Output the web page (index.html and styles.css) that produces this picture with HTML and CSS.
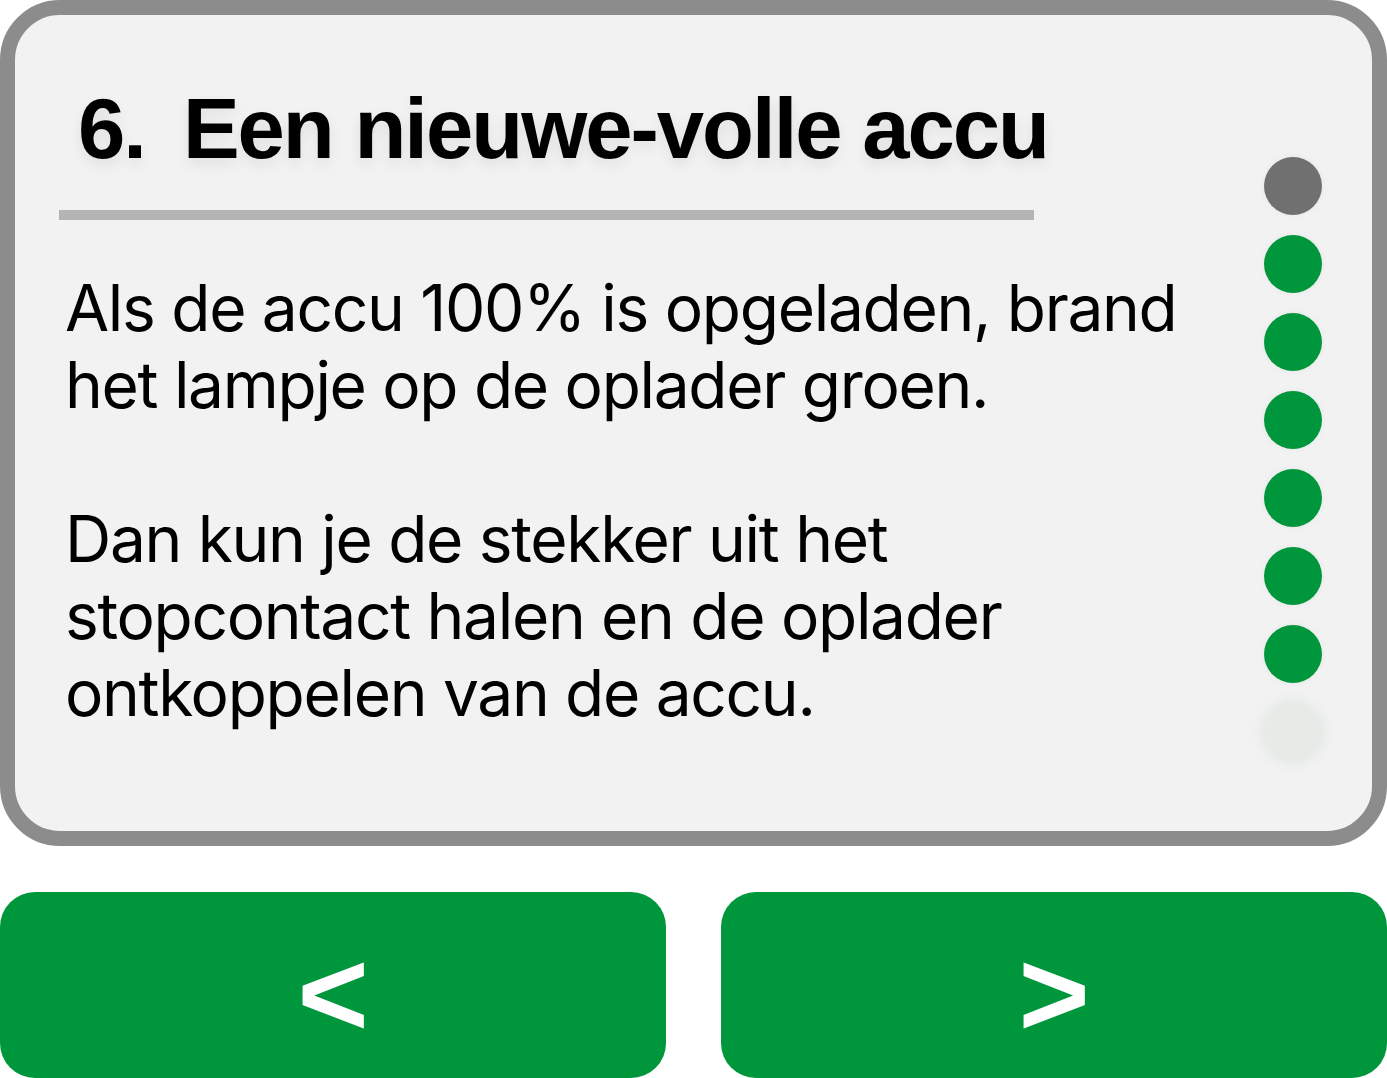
FILE: index.html
```html
<!DOCTYPE html>
<html lang="nl">
<head>
  <meta charset="UTF-8" />
  <meta name="viewport" content="width=device-width, initial-scale=1" />
  <title>Stap 6</title>
  <link rel="stylesheet" href="styles.css">
</head>
<body>

  <div class="step-card">
    <div class="step-main">
      <h1 class="step-title"><span class="step-num">6.</span>Een nieuwe-volle accu</h1>
      <div class="step-rule"></div>
      <div class="step-text">
        <p>Als de accu 100% is opgeladen, brand het lampje op de oplader groen.</p>
        <p>Dan kun je de stekker uit het stopcontact halen en de oplader ontkoppelen van de accu.</p>
      </div>
    </div>

    <!-- progress lights -->
    <div class="step-dots" aria-label="Voortgang">
      <span class="dot dot-off"></span>
      <span class="dot dot-on"></span>
      <span class="dot dot-on"></span>
      <span class="dot dot-on"></span>
      <span class="dot dot-on"></span>
      <span class="dot dot-on"></span>
      <span class="dot dot-on"></span>
      <span class="dot dot-fade"></span>
    </div>
  </div>

  <div class="step-nav">
    <button class="nav-btn" aria-label="Vorige">&lt;</button>
    <button class="nav-btn" aria-label="Volgende">&gt;</button>
  </div>

</body>
</html>
```

FILE: styles.css
```css
/* Base */
body {
  margin: 0;
  background: #ffffff;
  color: #000000;
  font-family: 'Inter', 'Liberation Sans', sans-serif;
}

/* Card */
.step-card {
  display: flex;
  height: 846px;
  box-sizing: border-box;
  border: 15px solid #8c8c8c;
  border-radius: 60px;
  background: #f2f2f2;
  overflow: hidden;
}
.step-main {
  flex-grow: 1;
  padding: 71px 0 0 44px;
}
.step-title {
  margin: 0 0 0 19px;
  font-family: 'Liberation Sans', Arial, sans-serif;
  font-weight: 700;
  font-size: 85px;
  line-height: 85px;
  letter-spacing: -2px;
  white-space: nowrap;
  text-shadow: 0 6px 14px rgba(0, 0, 0, 0.08);
}
.step-num {
  margin-right: 38px;
}
.step-rule {
  width: 975px;
  height: 10px;
  margin-top: 39px;
  background: #b4b4b4;
}
.step-text {
  width: 1130px;
  margin-top: 49px;
  padding-left: 6px;
  font-size: 64px;
  line-height: 77px;
  letter-spacing: -1.3px;
}
.step-text p {
  margin: 0 0 77px 0;
}

/* Progress dots */
.step-dots {
  display: flex;
  flex-direction: column;
  gap: 20px;
  padding: 142px 50px 0 0;
  flex-shrink: 0;
}
.dot {
  display: block;
  width: 58px;
  height: 58px;
  border-radius: 50%;
  box-shadow: 0 0 6px rgba(0, 0, 0, 0.05);
}
.dot-off {
  background: #707070;
}
.dot-on {
  background: #00963c;
}
.dot-fade {
  background: #e6ebe8;
  box-shadow: 0 0 10px 4px rgba(225, 232, 228, 0.8);
}

/* Navigation buttons */
.step-nav {
  display: flex;
  gap: 55px;
  margin-top: 46px;
}
.nav-btn {
  flex: 1;
  height: 186px;
  border: none;
  border-radius: 35px;
  background: #00963c;
  color: #ffffff;
  font-family: 'Liberation Sans', Arial, sans-serif;
  font-weight: 700;
  font-size: 122px;
  line-height: 1;
  padding: 18px 0 0 0;
  cursor: pointer;
}
```
